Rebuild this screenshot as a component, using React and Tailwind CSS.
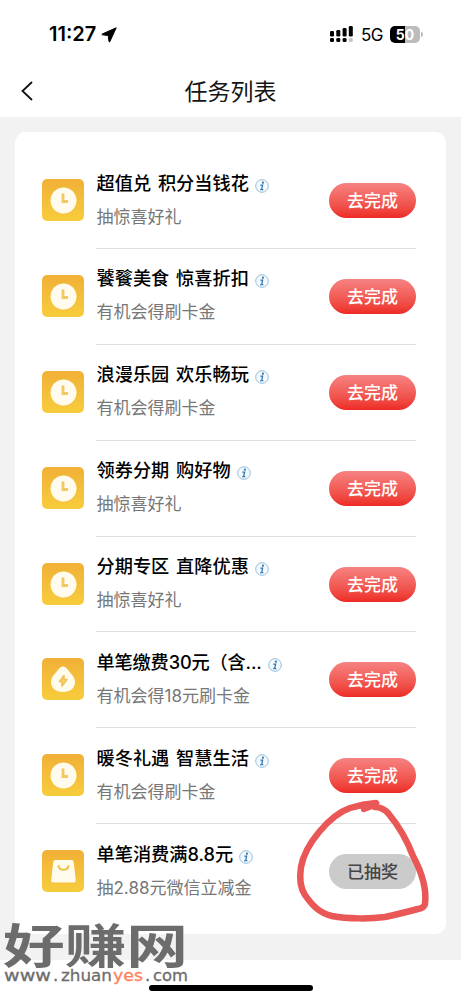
import { useState } from "react";

const TASKS = [
  { icon: "clock", title: "超值兑 积分当钱花", desc: "抽惊喜好礼" },
  { icon: "clock", title: "饕餮美食 惊喜折扣", desc: "有机会得刷卡金" },
  { icon: "clock", title: "浪漫乐园 欢乐畅玩", desc: "有机会得刷卡金" },
  { icon: "clock", title: "领券分期 购好物", desc: "抽惊喜好礼" },
  { icon: "clock", title: "分期专区 直降优惠", desc: "抽惊喜好礼" },
  { icon: "drop", title: "单笔缴费30元（含...", desc: "有机会得18元刷卡金" },
  { icon: "clock", title: "暖冬礼遇 智慧生活", desc: "有机会得刷卡金" },
  { icon: "bag", title: "单笔消费满8.8元", desc: "抽2.88元微信立减金", done: true },
];

function TaskIcon({ type }) {
  return (
    <div className="w-[42px] h-[42px] shrink-0 rounded-[5px] bg-linear-to-b from-[#f1b037] to-[#f7cc3c]">
      <svg viewBox="0 0 42 42" className="w-full h-full" fill="none">
        {type === "clock" && (
          <>
            <circle cx="21.5" cy="21.5" r="13" fill="#fffbed" />
            <path d="M21 14.500v8h5" stroke="#f2c862" strokeWidth="2.800" />
          </>
        )}
        {type === "drop" && (
          <>
            <path d="M21 8.500c2 0 4 2 6 4.500 3 4 6 6.500 6 11C33 30.500 28 34 21 34S9 30.500 9 24C9 19.500 12 17 15 13c2-2.500 4-4.500 6-4.500z" fill="#fffbed" />
            <path d="M22 17.500l-4.500 6h2.500v4.500l5-6.500h-3z" fill="#f9d471" stroke="#f0c25a" strokeWidth="1.600" strokeLinejoin="round" />
          </>
        )}
        {type === "bag" && (
          <>
            <path d="M13.500 10h16q2 0 2.200 2l2 18q.2 2.500-2.200 2.500h-20Q9 32.500 9.200 30l2-18q.3-2 2.300-2z" fill="#fffbed" />
            <path d="M16.500 16c1 5 9 5 10 0" stroke="#efc24d" strokeWidth="2" strokeLinecap="round" />
          </>
        )}
      </svg>
    </div>
  );
}

function InfoIcon() {
  return (
    <svg viewBox="0 0 14 14" className="w-[14px] h-[14px] shrink-0 mt-[9px]" fill="none">
      <circle cx="7" cy="7" r="6.300" fill="#f3faff" stroke="#8cb5d4" strokeWidth=".9" />
      <circle cx="7.900" cy="3.700" r="1.100" fill="#3478ae" />
      <path d="M5.300 6.200h2.300l-1 4.400M5.200 10.700h3.100" stroke="#3478ae" strokeWidth="1.300" />
    </svg>
  );
}

function StatusBar() {
  return (
    <div className="h-[65px] flex items-start pl-[49px] pr-[38px] pt-[22px]">
      <span className="w-[48px] text-[20px] leading-[25px] font-semibold">11:27</span>
      <svg viewBox="0 0 16 16" className="w-4 h-4 mt-[5px] ml-[4px]">
        <path d="M15.200 .8L8.800 14.700Q8.300 15.400 8 14.400L7.300 9.200Q7.200 8.500 6.500 8.400L1.400 7.800Q.3 7.500 1.300 7z" fill="#000" stroke="#000" strokeWidth="1" strokeLinejoin="round" />
      </svg>
      <div className="flex-1" />
      <svg viewBox="0 0 24 17" className="w-6 h-[17px] mt-[4px]">
        <rect x="0" y="5" width="4" height="5.500" rx="1.300" />
        <rect x="6.300" y="4" width="4" height="6.500" rx="1.300" />
        <rect x="12.600" y="2" width="4" height="8.500" rx="1.300" />
        <rect x="18.800" y="0" width="4" height="10.500" rx="1.300" />
        <rect x="0" y="12" width="4" height="4" rx="1.300" />
        <rect x="6.300" y="12" width="4" height="4" rx="1.300" />
        <rect x="12.600" y="12" width="4" height="4" rx="1.300" />
        <rect x="18.800" y="12" width="4" height="4" rx="1.300" fill="#c5c5c5" />
      </svg>
      <span className="text-[17px] leading-[26px] ml-[7px] w-[29px] tracking-[-0.500px]">5G</span>
      <div className="flex w-[30px] h-[17px] mt-[4px] rounded-[5px] bg-linear-to-r from-black from-50% to-[#bcbcbc] to-50% text-white text-[14px] leading-[17px] font-bold justify-center">
        50
      </div>
      <div className="w-[2px] h-[5px] mt-[10px] ml-px rounded-r-full bg-[#bcbcbc]" />
    </div>
  );
}

function TaskRow({ task, last }) {
  return (
    <div className={`flex h-[95.900px] pt-[26px] ${last ? "" : "border-b border-[#dfdfdf]"}`}>
      <TaskIcon type={task.icon} />
      <div className="ml-[12.500px] -mt-[9.500px] flex-1 min-w-0">
        <div className="flex h-[26px] gap-[6px] whitespace-nowrap">
          <h2
            className={`text-[18.200px] leading-[26px] font-medium text-black [word-spacing:2px] ${
              task.icon === "drop" ? "tracking-[-0.150px]" : ""
            }`}
          >
            {task.title}
          </h2>
          <InfoIcon />
        </div>
        <p className="mt-[8px] text-[17px] leading-[26px] text-[#777]">{task.desc}</p>
      </div>
      <button
        className={`w-[87px] h-[35px] mt-[4px] shrink-0 rounded-full text-[17px] leading-[36px] font-medium ${
          task.done
            ? "bg-[#cbcbcb] text-[#444]"
            : "bg-linear-to-b from-[#f58282] to-[#ed2924] text-white"
        }`}
      >
        {task.done ? "已抽奖" : "去完成"}
      </button>
    </div>
  );
}

export default function App() {
  const [tasks] = useState(TASKS);

  return (
    <div className="relative w-[461px] h-[1000px] overflow-hidden bg-white text-black font-[Inter,'Noto_Sans_CJK_SC',sans-serif]">
      <StatusBar />

      {/* header */}
      <header className="h-[52px] grid grid-cols-[60px_1fr_60px] items-center">
        <svg viewBox="0 0 12 20" className="w-3 h-5 ml-[21px]" fill="none">
          <path d="M11 1L1.500 10 11 19" stroke="#111" strokeWidth="1.800" />
        </svg>
        <h1 className="text-center text-[23px] leading-8 pt-px font-normal text-[#151515]">任务列表</h1>
      </header>

      {/* tasks */}
      <main className="h-[843px] bg-[#f2f2f2] px-[15px] pt-[15px]">
        <div className="h-[802px] rounded-[11px] bg-white pl-[27px] pr-[30px] pt-[21px]">
          {tasks.map((task, i) => (
            <div key={task.title} className="relative">
              <TaskRow task={task} last={i === tasks.length - 1} />
              {/* dividers start at the text column */}
              <div className="absolute left-0 bottom-0 w-[54px] h-[2px] bg-white" />
            </div>
          ))}
        </div>
      </main>

      {/* home indicator */}
      <div className="ml-[149px] mt-[25px] w-[164px] h-[6px] rounded-full bg-black" />

      {/* hand-drawn circle */}
      <svg viewBox="0 0 171 140" className="absolute left-[290px] top-[790px] w-[171px] h-[140px]" fill="none">
        <path
          d="M74 19Q81 17 86 13Q73 14 60 18C40 25 15 54 11 77C9 90 11 99 15 105C22 115 29 123 42 126C58 129 80 129 95 127Q105 125 128 119Q134 118 135 114C137 98 130 79 123 66C117 50 108 35 98 23Q92 17 85 17"
          stroke="#e95757"
          strokeWidth="6.500"
          strokeLinecap="round"
          strokeLinejoin="round"
        />
      </svg>

      {/* watermark */}
      <svg viewBox="0 0 200 90" className="absolute left-0 top-[905px] w-[200px] h-[90px] overflow-visible" fill="#6c6c6c">
        <text x="3" y="57.500" fontSize="47" fontWeight="700" textLength="185" lengthAdjust="spacingAndGlyphs" className="font-['Noto_Sans_CJK_SC',sans-serif]">
          好赚网
        </text>
        <g fontSize="16.500" className="font-['DejaVu_Sans',sans-serif]" stroke="#6c6c6c" strokeWidth=".3">
          <text x="4" y="76" textLength="47" lengthAdjust="spacingAndGlyphs">www</text>
          <text x="53" y="76">.</text>
          <text x="61" y="76" textLength="51" lengthAdjust="spacingAndGlyphs">zhuan</text>
          <text x="113" y="76" textLength="30" lengthAdjust="spacingAndGlyphs" fill="#ff7f5c" stroke="#ff7f5c">yes</text>
          <text x="145" y="76">.</text>
          <text x="153" y="76" textLength="35" lengthAdjust="spacingAndGlyphs">com</text>
        </g>
      </svg>
    </div>
  );
}
